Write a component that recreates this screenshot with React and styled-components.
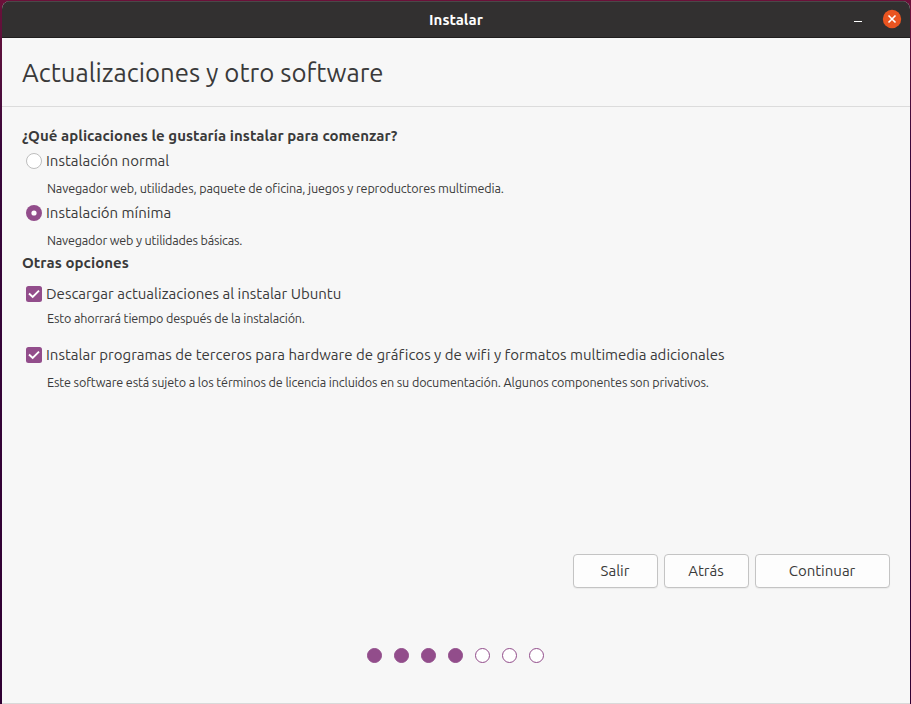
import React from "react";
import styled, { createGlobalStyle } from "styled-components";

const GlobalStyle = createGlobalStyle`
  * { box-sizing: border-box; }
  body { margin: 0; overflow: hidden; }
`;
const Desktop = styled.div`
  width: 911px;
  height: 704px;
  padding: 1px 1px 0 2px;
  background: linear-gradient(#6b1039 0, #58103c 60px, #38063a 150px, #300033 100%);
  font-family: Ubuntu, "Noto Sans", sans-serif;
  font-variant-ligatures: none;
  color: #3a3a3a;
`;
const Window = styled.main`
  height: 703px;
  display: flex;
  flex-direction: column;
  background: #f7f7f7;
  border-bottom: 1px solid #d9d9d9;
  border-radius: 8px 8px 0 0;
  overflow: hidden;
`;
const TitleBar = styled.header`
  height: 37px;
  flex: none;
  display: grid;
  grid-template-columns: 1fr auto 1fr;
  align-items: center;
  background: #323030;
  border-top: 1px solid #4a4848;
  border-bottom: 1px solid #201e1e;
  color: #fff;
`;
const WindowControls = styled.div`
  grid-column: 3;
  justify-self: end;
  display: flex;
  align-items: center;
  gap: 20px;
  padding-right: 8px;
  margin-top: -1px;
`;
const WindowTitle = styled.div`
  grid-column: 2;
  font-size: 15px;
  font-weight: 700;
  line-height: 20px;
`;
const Control = styled.button`
  display: block;
  padding: 0;
  border: 0;
  background: none;
  svg { display: block; }
`;
const PageHeader = styled.div`
  height: 69px;
  flex: none;
  display: flex;
  align-items: center;
  padding: 2px 20px 0;
  border-bottom: 1px solid #dcdcdc;
`;
const PageTitle = styled.h1`
  margin: 0;
  font-size: 25.75px;
  font-weight: 400;
  line-height: 36px;
  white-space: nowrap;
`;
const Options = styled.section`
  height: 447px;
  flex: none;
  padding: 19px 20px 0;
`;
const Heading = styled.h2`
  margin: ${(p) => p.$gap}px 0 0;
  font-size: 15px;
  font-weight: 700;
  line-height: 20px;
  white-space: nowrap;
  letter-spacing: 0.05px;
`;
const Option = styled.div`
  height: 20px;
  margin-top: ${(p) => p.$gap}px;
  padding-left: 4px;
  display: flex;
  align-items: center;
  gap: 4px;
  font-size: 15px;
  line-height: 20px;
  white-space: nowrap;
  svg { flex: none; }
`;
const Label = styled.span`
  letter-spacing: 0.005px;
`;
const Hint = styled.p`
  margin: ${(p) => p.$gap}px 0 0 25px;
  font-size: 12.6px;
  letter-spacing: ${(p) => p.$track ?? -0.135}px;
  line-height: 20px;
  white-space: nowrap;
`;
const Actions = styled.div`
  display: flex;
  justify-content: flex-end;
  gap: 6px;
  padding-right: 20px;
`;
const Button = styled.button`
  width: ${(p) => p.$width}px;
  height: 34px;
  padding: 0 1px 0 0;
  border: 1px solid #c4c4c4;
  border-radius: 4px;
  background: #fdfdfd;
  box-shadow: 0 1px 1px rgba(0, 0, 0, 0.05);
  color: inherit;
  font: 15px/20px Ubuntu, "Noto Sans", sans-serif;
`;
const Steps = styled.div`
  display: flex;
  justify-content: center;
  gap: 12px;
  margin-top: 60px;
  padding-right: 1px;
`;
const Step = styled.span`
  width: 15px;
  height: 15px;
  border: 1px solid #924d8b;
  border-radius: 50%;
  background: ${(p) => (p.$done ? "#924d8b" : "#fff")};
`;

const Radio = ({ checked }) => (
  <svg width="16" height="16" viewBox="0 0 16 16">
    {checked ? (
      <>
        <circle cx="8" cy="8" r="8" fill="#924d8b" />
        <circle cx="8" cy="8" r="2.6" fill="#fff" />
      </>
    ) : (
      <circle cx="8" cy="8" r="7.5" fill="#fff" stroke="#bdbdbd" />
    )}
  </svg>
);
const Check = () => (
  <svg width="16" height="16" viewBox="0 0 16 16">
    <rect width="16" height="16" rx="2.5" fill="#924d8b" />
    <path d="M3 7.5 6.7 11 13 4.7" fill="none" stroke="#fff" strokeWidth="1.9" />
  </svg>
);

export default function App() {
  return (
    <Desktop>
      <GlobalStyle />
      <Window>
        <TitleBar>
          <WindowTitle>Instalar</WindowTitle>
          <WindowControls>
            <Control aria-label="Minimizar">
              <svg width="8" height="18" viewBox="0 0 8 18"><path d="M0 11.5h8" stroke="#fff" /></svg>
            </Control>
            <Control aria-label="Cerrar">
              <svg width="20" height="20" viewBox="0 0 20 20">
                <circle cx="10" cy="10" r="9.2" fill="#e95420" />
                <path d="m6.5 6.5 7 7m0-7-7 7" stroke="#fff" strokeWidth="1.6" />
              </svg>
            </Control>
          </WindowControls>
        </TitleBar>
        <PageHeader>
          <PageTitle>Actualizaciones y otro software</PageTitle>
        </PageHeader>
        <Options>
          <Heading $gap={0}>¿Qué aplicaciones le gustaría instalar para comenzar?</Heading>
          <Option $gap={5}><Radio /><Label>Instalación normal</Label></Option>
          <Hint $gap={7}>Navegador web, utilidades, paquete de oficina, juegos y reproductores multimedia.</Hint>
          <Option $gap={5}><Radio checked /><Label>Instalación mínima</Label></Option>
          <Hint $gap={7} $track={-0.19}>Navegador web y utilidades básicas.</Hint>
          <Heading $gap={3}>Otras opciones</Heading>
          <Option $gap={11}><Check /><Label>Descargar actualizaciones al instalar Ubuntu</Label></Option>
          <Hint $gap={4} $track={-0.16}>Esto ahorrará tiempo después de la instalación.</Hint>
          <Option $gap={17}><Check /><Label>Instalar programas de terceros para hardware de gráficos y de wifi y formatos multimedia adicionales</Label></Option>
          <Hint $gap={7}>Este software está sujeto a los términos de licencia incluidos en su documentación. Algunos componentes son privativos.</Hint>
        </Options>
        <Actions>
          <Button $width={85}>Salir</Button>
          <Button $width={85}>Atrás</Button>
          <Button $width={135}>Continuar</Button>
        </Actions>
        <Steps>
          {[1, 2, 3, 4, 5, 6, 7].map((n) => <Step key={n} $done={n <= 4} />)}
        </Steps>
      </Window>
    </Desktop>
  );
}
